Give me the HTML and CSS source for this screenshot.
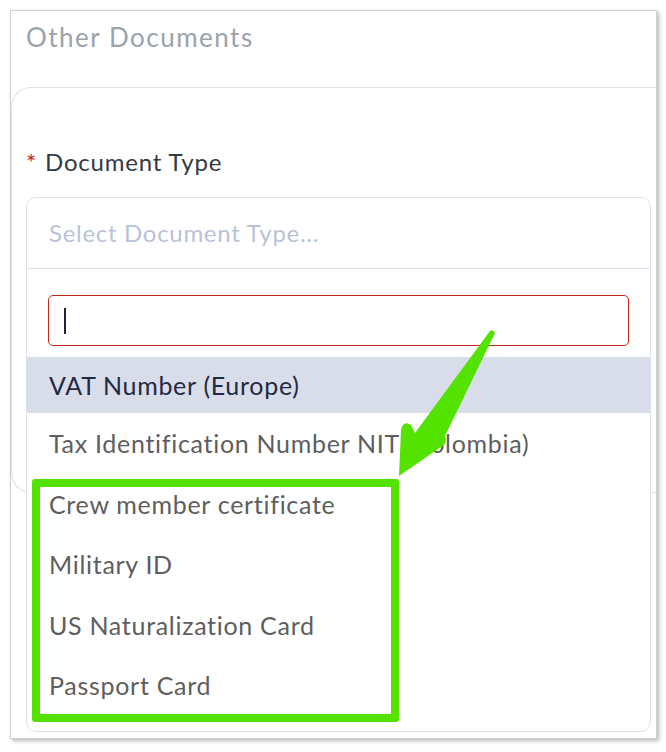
FILE: index.html
```html
<!DOCTYPE html>
<html lang="en">
<head>
    <meta charset="UTF-8">
    <meta name="viewport" content="width=device-width, initial-scale=1.0">
    <title>Other Documents</title>
    <link rel="stylesheet" href="styles.css">
</head>
<body>
    <div class="frame">
        <h2 class="section-title">Other Documents</h2>
        <div class="card">
            <div class="field-label"><span class="required">*</span>Document Type</div>
            <div class="dropdown">
                <div class="dropdown-header">Select Document Type...</div>
                <div class="search-box"><span class="caret"></span></div>
                <ul class="options">
                    <li class="option active">VAT Number (Europe)</li>
                    <li class="option">Tax Identification Number NIT (Colombia)</li>
                    <li class="option">Crew member certificate</li>
                    <li class="option">Military ID</li>
                    <li class="option">US Naturalization Card</li>
                    <li class="option">Passport Card</li>
                </ul>
            </div>
        </div>
    </div>

    <!-- annotation drawn over the screenshot -->
    <div class="highlight-box"></div>
    <svg class="arrow" width="666" height="752" viewBox="0 0 666 752">
        <path d="M490 331 Q493 329 495 333 L445 436 Q448 444 441 447 L399 476 L401 430 Q403 420 411 425 L415 433 Z" fill="#54e200"/>
    </svg>
</body>
</html>
```

FILE: styles.css
```css
body {
    margin: 0;
    padding: 0;
    background-color: #fff;
    font-family: 'Lato', sans-serif;
    position: relative;
    width: 666px;
    height: 752px;
    overflow: hidden;
}
.frame {
    margin: 10px 0 0 10px;
    width: 645px;
    height: 727px;
    border: 1px solid #d2d2d2;
    box-shadow: 2px 2px 4px rgba(0, 0, 0, 0.28);
    overflow: hidden;
    background-color: #fff;
}
.section-title {
    margin: 0;
    padding: 11px 0 0 15px;
    font-size: 26px;
    line-height: 30px;
    font-weight: 400;
    letter-spacing: 1.5px;
    color: #9ba2ac;
}
.card {
    margin-top: 35px;
    width: 700px;
    height: 406px;
    padding-left: 14px;
    box-sizing: border-box;
    border: 1px solid #dfe0ea;
    border-right: none;
    border-radius: 20px 0 0 20px;
}
.field-label {
    padding-top: 59px;
    font-size: 24px;
    line-height: 30px;
    letter-spacing: 0.8px;
    color: #343a43;
}
.required {
    display: inline-block;
    width: 19px;
    color: #c4261b;
    font-size: 24px;
    letter-spacing: 0;
}
.dropdown {
    margin-top: 20px;
    width: 625px;
    height: 535px;
    box-sizing: border-box;
    border: 1px solid #dde1ea;
    border-radius: 10px;
    background-color: #fff;
}
.dropdown-header {
    height: 70px;
    line-height: 70px;
    padding-left: 22px;
    border-bottom: 1px solid #dde1ea;
    font-size: 24px;
    letter-spacing: 0.7px;
    color: #b8c3d8;
}
.search-box {
    margin: 26px 21px 0 21px;
    height: 51px;
    box-sizing: border-box;
    border: 1px solid #c4281c;
    border-radius: 5px;
    padding: 12px 0 0 15px;
}
.caret {
    display: block;
    width: 2px;
    height: 26px;
    background-color: #1d2435;
}
.options {
    list-style: none;
    margin: 11px 0 0 0;
    padding: 0;
}
.option {
    height: 60.5px;
    line-height: 61px;
    padding-left: 22px;
    font-size: 25px;
    letter-spacing: 0.7px;
    color: #5e5e5e;
}
.option.active {
    height: 56px;
    line-height: 56px;
    background-color: #d9dde9;
    color: #1f2a44;
}
/* green annotation */
.highlight-box {
    position: absolute;
    left: 32px;
    top: 479px;
    width: 351px;
    height: 227px;
    border: 8px solid #54e200;
    border-radius: 3px;
}
.arrow {
    position: absolute;
    left: 0;
    top: 0;
    pointer-events: none;
}
```
